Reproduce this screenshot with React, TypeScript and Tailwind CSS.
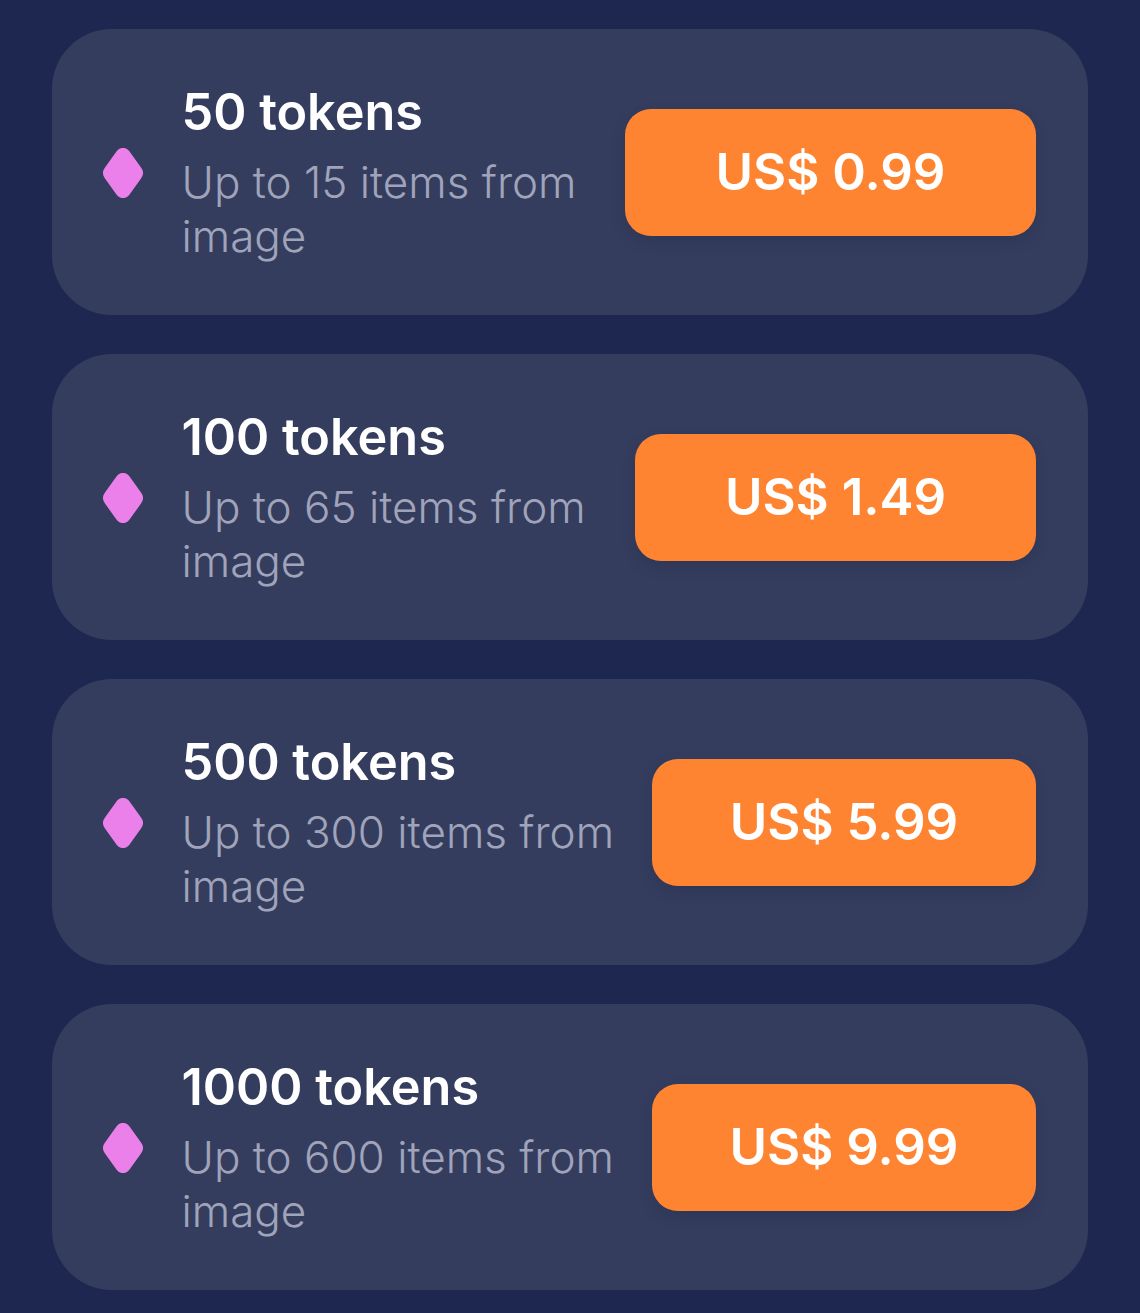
const PLANS = [
  { name: "50 tokens", desc: "Up to 15 items from image", price: "US$ 0.99", w: "w-[411px]" },
  { name: "100 tokens", desc: "Up to 65 items from image", price: "US$ 1.49", w: "w-[401px]" },
  { name: "500 tokens", desc: "Up to 300 items from image", price: "US$ 5.99", w: "w-[384px]" },
  { name: "1000 tokens", desc: "Up to 600 items from image", price: "US$ 9.99", w: "w-[384px]" },
];

function Diamond() {
  return (
    <svg width="40" height="50" viewBox="0 0 40 50" className="shrink-0 -ml-px mt-[2px]">
      <path
        d="M14 2.8a7.6 7.6 0 0 1 12 0l12 16.6a9.4 9.4 0 0 1 0 11.2l-12 16.6a7.6 7.6 0 0 1-12 0l-12-16.6a9.4 9.4 0 0 1 0-11.2z"
        fill="#EC80EA"
      />
    </svg>
  );
}

export default function App() {
  return (
    <div className="w-[1140px] h-[1313px] bg-[#1E2750] px-[52px] pt-[29px] flex flex-col gap-[39px] font-['Inter',sans-serif] overflow-hidden">
      {PLANS.map((p) => (
        <div key={p.name} className="h-[286px] shrink-0 rounded-[60px] bg-[#353D5F] px-[52px] flex items-center">
          <Diamond />
          <div className="ml-[38.5px] min-w-0 flex-1">
            <div className="text-[50.4px] leading-[62px] font-semibold text-white">{p.name}</div>
            <div className="mt-[12px] text-[44px] leading-[54px] font-light text-[#A0A4BA] max-w-[440px]">{p.desc}</div>
          </div>
          <div className={`${p.w} h-[127px] shrink-0 rounded-[26px] bg-[#FF8431] shadow-[0_6px_14px_rgba(20,25,50,0.18)] flex items-center justify-center text-[51px] font-semibold text-white`}>
            {p.price}
          </div>
        </div>
      ))}
    </div>
  );
}
